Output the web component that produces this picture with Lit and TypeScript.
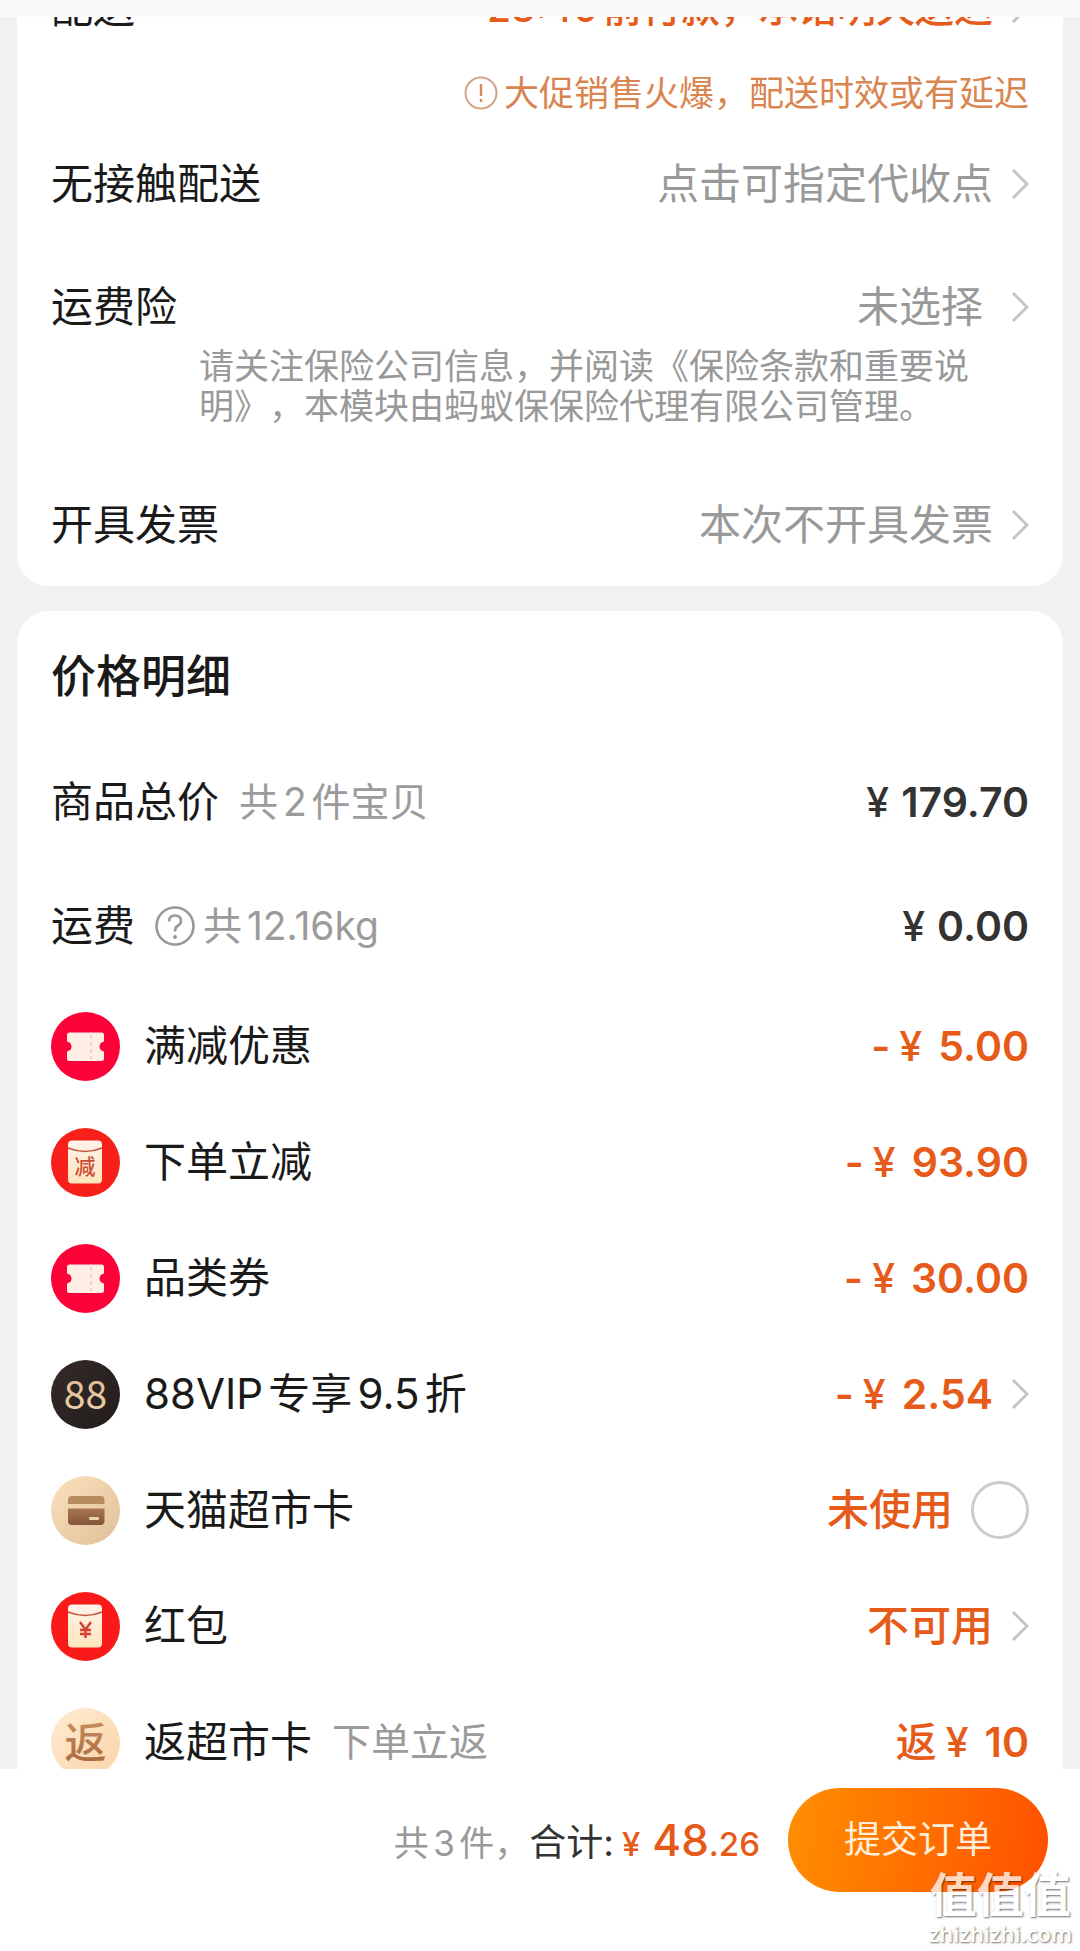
import { LitElement, html, svg, css, nothing } from "lit";
import { customElement, property } from "lit/decorators.js";

type IconKind = "ticket" | "reduce" | "vip" | "card" | "packet" | "back";

interface Discount {
  icon: IconKind;
  label: string;
  hint?: string;
  prefix?: string;
  amount?: string;
  status?: string;
  control?: "link" | "radio";
}

const DISCOUNTS: Discount[] = [
  { icon: "ticket", label: "满减优惠", prefix: "-", amount: "5.00" },
  { icon: "reduce", label: "下单立减", prefix: "-", amount: "93.90" },
  { icon: "ticket", label: "品类券", prefix: "-", amount: "30.00" },
  { icon: "vip", label: "88VIP专享9.5折", prefix: "-", amount: "2.54", control: "link" },
  { icon: "card", label: "天猫超市卡", status: "未使用", control: "radio" },
  { icon: "packet", label: "红包", status: "不可用", control: "link" },
  { icon: "back", label: "返超市卡", hint: "下单立返", prefix: "返", amount: "10" },
];

const chevron = html`<svg class="chevron" viewBox="0 0 18 32" aria-hidden="true">
  <path d="M2 2 L16 16 L2 30" fill="none" stroke="#c4c4c4" stroke-width="3" />
</svg>`;

@customElement("discount-icon")
export class DiscountIcon extends LitElement {
  @property() kind: IconKind = "ticket";

  static styles = css`
    :host { display: block; flex: none; width: 69px; height: 69px; }
    svg { display: block; width: 100%; height: 100%; }
    text { font-family: "Noto Sans CJK SC", sans-serif; text-anchor: middle; }
    .digits { font-family: "Liberation Sans Narrow", "Noto Sans CJK SC", sans-serif; }
  `;

  private envelope(mark: unknown, base: string) {
    return svg`
      <defs>
        <linearGradient id="paper" x1="0" y1="0" x2="0" y2="1">
          <stop offset="0" stop-color="#fff3ea" /><stop offset="1" stop-color="#fde6bd" />
        </linearGradient>
      </defs>
      <circle cx="34.5" cy="34.5" r="34.5" fill=${base} />
      <rect x="17" y="12.5" width="34" height="43" rx="4" fill="url(#paper)" />
      <path d="M17 20 Q34 27 51 20" fill="none" stroke="#c9543f" stroke-width="1.6" />
      ${mark}`;
  }

  private art() {
    switch (this.kind) {
      case "ticket":
        return svg`
          <circle cx="34.5" cy="34.5" r="34.5" fill="#fb0338" />
          <path d="M18.500 20.500 H50.500 Q53 20.500 53 23 V29.500 Q48.500 30.500 48.500 34.500 Q48.500 38.500 53 39.500 V46.500 Q53 49 50.500 49 H18.500 Q16 49 16 46.500 V39.500 Q20.500 38.500 20.500 34.500 Q20.500 30.500 16 29.500 V23 Q16 20.500 18.500 20.500 Z" fill="#ffeee6" />
          <path d="M40 23 V47" stroke="#f6cdc4" stroke-width="2" stroke-dasharray="4 3" />`;
      case "reduce":
        return this.envelope(svg`<text x="34" y="46" font-size="21" font-weight="500" fill="#cf4a35">减</text>`, "#f8201a");
      case "packet":
        return this.envelope(svg`<path d="M29 30 L34.500 37.500 L40 30 M34.500 37 V46 M29 38 H40 M29 42 H40" fill="none" stroke="#d2402f" stroke-width="2.400" />`, "#fb1a1a");
      case "vip":
        return svg`
          <defs>
            <linearGradient id="dark" x1="0" y1="0" x2="1" y2="1">
              <stop offset="0" stop-color="#352a28" /><stop offset="1" stop-color="#211d1b" />
            </linearGradient>
            <linearGradient id="gold" x1="0" y1="0" x2="0" y2="1">
              <stop offset="0" stop-color="#dfb088" /><stop offset="1" stop-color="#efd8b4" />
            </linearGradient>
          </defs>
          <circle cx="34.5" cy="34.5" r="34.5" fill="url(#dark)" />
          <text class="digits" x="34.500" y="49" font-size="39" fill="url(#gold)">88</text>`;
      case "card":
        return svg`
          <defs>
            <linearGradient id="sand" x1="0" y1="0" x2="1" y2="1">
              <stop offset="0" stop-color="#fbe2bd" /><stop offset="1" stop-color="#e0bf99" />
            </linearGradient>
            <linearGradient id="brown" x1="0" y1="0" x2="0" y2="1">
              <stop offset="0" stop-color="#a87651" /><stop offset="1" stop-color="#845538" />
            </linearGradient>
          </defs>
          <circle cx="34.5" cy="34.5" r="34.5" fill="url(#sand)" />
          <path d="M17 28 V24 Q17 20 21 20 H49.500 Q53.500 20 53.500 24 V28 Z" fill="#b98c5f" />
          <path d="M17 32.500 H53.500 V45 Q53.500 49 49.500 49 H21 Q17 49 17 45 Z" fill="url(#brown)" />
          <rect x="38" y="41" width="10" height="3" rx="1" fill="#f0d3ae" />`;
      case "back":
        return svg`
          <defs>
            <linearGradient id="cream" x1="0" y1="0" x2="1" y2="1">
              <stop offset="0" stop-color="#ffecd2" /><stop offset="1" stop-color="#fbd3a8" />
            </linearGradient>
            <linearGradient id="bronze" x1="0" y1="0" x2="0" y2="1">
              <stop offset="0" stop-color="#cf9768" /><stop offset="1" stop-color="#a5663a" />
            </linearGradient>
          </defs>
          <circle cx="34.5" cy="34.5" r="34.5" fill="url(#cream)" />
          <text x="34.500" y="50" font-size="42" font-weight="500" fill="url(#bronze)">返</text>`;
    }
  }

  render() {
    return html`<svg viewBox="0 0 69 69" aria-hidden="true">${this.art()}</svg>`;
  }
}

@customElement("app-root")
export class AppRoot extends LitElement {
  static styles = css`
    :host {
      display: flex;
      flex-direction: column;
      height: 100vh;
      overflow: hidden;
      position: relative;
      background: #f1f1f1;
      color: #1a1a1a;
      font-family: Inter, "Noto Sans CJK SC", sans-serif;
      font-size: 42px;
      line-height: 60px;
      text-spacing-trim: space-all;
      text-autospace: normal;
    }
    * { box-sizing: border-box; }
    h2, p { margin: 0; }
    a { color: inherit; text-decoration: none; }
    .topbar { flex: none; height: 17px; background: #fafafb; z-index: 1; }
    .scroll {
      flex: 1;
      min-height: 0;
      overflow: hidden;
      display: flex;
      flex-direction: column;
      justify-content: flex-end;
      gap: 25px;
      padding: 0 17px;
    }
    .card {
      flex: none;
      background: #fff;
      border-radius: 32px;
      padding: 0 34px;
    }
    .delivery { padding-bottom: 31px; }
    .prices { padding-top: 36px; padding-bottom: 40px; margin-bottom: -71px; }
    .row {
      display: flex;
      align-items: center;
      justify-content: space-between;
    }
    .value { display: flex; align-items: center; gap: 18px; color: #999; }
    .value.wide { gap: 28px; }
    .chevron { flex: none; width: 18px; height: 32px; }
    .promise { color: #e65a1a; font-size: 39px; font-weight: 500; }
    .warning {
      display: flex;
      align-items: center;
      justify-content: flex-end;
      gap: 6px;
      height: 110px;
      margin-bottom: 6px;
      font-size: 35px;
      color: #d98550;
    }
    .warning svg { width: 34px; height: 34px; }
    .insurance { margin-top: 63px; }
    .note {
      margin: 9px 52px 0 148px;
      font-size: 35px;
      line-height: 40px;
      color: #999;
    }
    .invoice { margin-top: 69px; }
    .title { font-size: 45px; font-weight: 500; }
    .sum { height: 124px; }
    .title + .sum { margin-top: 33px; }
    .label { display: flex; align-items: center; gap: 20px; }
    .hint { font-size: 39px; color: #9b9b9b; }
    .weight { display: flex; align-items: center; gap: 8px; }
    .help { padding: 0; border: 0; background: none; display: block; height: 40px; }
    .help svg { display: block; width: 40px; height: 40px; }
    .money { display: flex; align-items: baseline; gap: 12px; font-size: 41px; font-weight: 600; color: #333; }
    .item { height: 116px; }
    .item .label > discount-icon { margin-right: 4px; }
    .item .value { color: #e65a1a; }
    .item .money { color: inherit; gap: 16px; }
    .currency { display: flex; align-items: baseline; gap: 9px; }
    .yen { font-weight: 500; }
    .status { font-weight: 500; }
    .radio {
      appearance: none;
      flex: none;
      margin: 0;
      width: 58px;
      height: 58px;
      border: 3px solid #ccc;
      border-radius: 50%;
      background: #fff;
    }
    .footer {
      flex: none;
      z-index: 1;
      height: 182px;
      background: #fff;
      display: flex;
      align-items: flex-start;
      justify-content: flex-end;
      padding: 19px 32px 0;
    }
    .summary { display: flex; align-items: baseline; padding: 22px 28px 0 0; }
    .count { font-size: 35px; color: #999; }
    .total { font-size: 37px; color: #333; }
    .final { display: flex; align-items: baseline; color: #e65a1a; font-weight: 500; font-size: 33px; }
    .final .yen { margin: 0 12px 0 8px; }
    .whole { font-size: 44px; }
    .submit {
      width: 260px;
      height: 104px;
      border: 0;
      border-radius: 52px;
      background: linear-gradient(100deg, #ff8f00, #ff5000);
      color: #ffeeda;
      font: inherit;
      font-size: 37px;
      padding: 0;
    }
    .watermark {
      position: absolute;
      right: 8px;
      bottom: 4px;
      z-index: 2;
      display: flex;
      flex-direction: column;
      align-items: center;
      color: #fff;
      opacity: 0.75;
      text-shadow: 1px 1px 2px rgba(0, 0, 0, 0.75);
      pointer-events: none;
    }
    .mark { font-size: 47px; font-weight: 700; line-height: 48px; }
    .site { font-family: "Open Sans", sans-serif; font-size: 22px; font-weight: 600; line-height: 28px; }
  `;

  private discount(item: Discount) {
    const id = `row-${item.icon}`;
    const value = item.amount
      ? html`<span class="money">
          <span class="currency"><span class=${item.prefix === "返" ? "status" : ""}>${item.prefix}</span><span class="yen">¥</span></span>
          <span>${item.amount}</span>
        </span>`
      : html`<span class="status">${item.status}</span>`;
    const right =
      item.control === "link"
        ? html`<a class="value" href="#">${value}${chevron}</a>`
        : html`<span class="value">${value}${item.control === "radio"
            ? html`<input class="radio" type="radio" id=${id} />`
            : nothing}</span>`;
    const name =
      item.control === "radio"
        ? html`<label for=${id}>${item.label}</label>`
        : html`<span>${item.label}</span>`;
    return html`<div class="row item">
      <div class="label">
        <discount-icon kind=${item.icon}></discount-icon>${name}
        ${item.hint ? html`<span class="hint">${item.hint}</span>` : nothing}
      </div>
      ${right}
    </div>`;
  }

  render() {
    return html`
      <div class="topbar"></div>
      <main class="scroll">
        <section class="card delivery">
          <div class="row">
            <span>配送</span>
            <a class="value" href="#"><span class="promise">23:40前付款，承诺明天送达</span>${chevron}</a>
          </div>
          <p class="warning">
            <svg viewBox="0 0 34 34" aria-hidden="true">
              <circle cx="17" cy="17" r="15.500" fill="none" stroke="#d3a586" stroke-width="2" />
              <path d="M17 8 V20 M17 23 V26" stroke="#d08a5c" stroke-width="2.400" />
            </svg>
            <span>大促销售火爆，配送时效或有延迟</span>
          </p>
          <div class="row">
            <span>无接触配送</span>
            <a class="value" href="#">点击可指定代收点${chevron}</a>
          </div>
          <div class="row insurance">
            <span>运费险</span>
            <a class="value wide" href="#">未选择${chevron}</a>
          </div>
          <p class="note">请关注保险公司信息，并阅读《保险条款和重要说明》，本模块由蚂蚁保保险代理有限公司管理。</p>
          <div class="row invoice">
            <span>开具发票</span>
            <a class="value" href="#">本次不开具发票${chevron}</a>
          </div>
        </section>
        <section class="card prices">
          <h2 class="title">价格明细</h2>
          <div class="row sum">
            <div class="label"><span>商品总价</span><span class="hint">共2件宝贝</span></div>
            <span class="money"><span class="yen">¥</span><span>179.70</span></span>
          </div>
          <div class="row sum">
            <div class="label">
              <span>运费</span>
              <span class="weight">
                <button class="help" type="button" aria-label="运费说明">
                  <svg viewBox="0 0 40 40" aria-hidden="true">
                    <circle cx="20" cy="20" r="18.500" fill="none" stroke="#999" stroke-width="2.600" />
                    <path d="M14 15.500 Q14 9.500 20 9.500 Q26 9.500 26 15 Q26 18 22.500 20 Q20 21.500 20 25.500" fill="none" stroke="#999" stroke-width="2.600" />
                    <circle cx="20" cy="31" r="2" fill="#999" />
                  </svg>
                </button>
                <span class="hint">共12.16kg</span>
              </span>
            </div>
            <span class="money"><span class="yen">¥</span><span>0.00</span></span>
          </div>
          ${DISCOUNTS.map((item) => this.discount(item))}
        </section>
      </main>
      <footer class="footer">
        <div class="summary">
          <span class="count">共3件，</span>
          <span class="total">合计:</span>
          <span class="final"><span class="yen">¥</span><span class="whole">48</span>.26</span>
        </div>
        <button class="submit" type="button">提交订单</button>
      </footer>
      <div class="watermark" aria-hidden="true">
        <span class="mark">值值值</span><span class="site">zhizhizhi.com</span>
      </div>
    `;
  }
}
